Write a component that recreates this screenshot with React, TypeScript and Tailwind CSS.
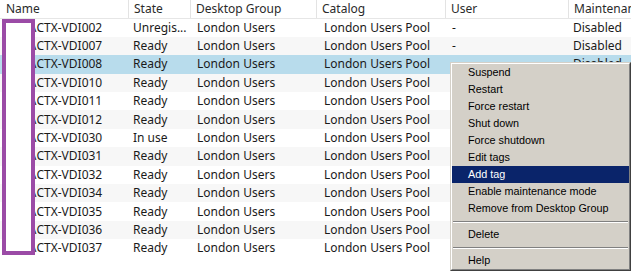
import React from "react";

const rows: [string, string, string, string, string, string][] = [
  ["CTX-VDI002", "Unregis...", "London Users", "London Users Pool", "-", "Disabled"],
  ["CTX-VDI007", "Ready", "London Users", "London Users Pool", "-", "Disabled"],
  ["CTX-VDI008", "Ready", "London Users", "London Users Pool", "", "Disabled"],
  ["CTX-VDI010", "Ready", "London Users", "London Users Pool", "", ""],
  ["CTX-VDI011", "Ready", "London Users", "London Users Pool", "", ""],
  ["CTX-VDI012", "Ready", "London Users", "London Users Pool", "", ""],
  ["CTX-VDI030", "In use", "London Users", "London Users Pool", "", ""],
  ["CTX-VDI031", "Ready", "London Users", "London Users Pool", "", ""],
  ["CTX-VDI032", "Ready", "London Users", "London Users Pool", "", ""],
  ["CTX-VDI034", "Ready", "London Users", "London Users Pool", "", ""],
  ["CTX-VDI035", "Ready", "London Users", "London Users Pool", "", ""],
  ["CTX-VDI036", "Ready", "London Users", "London Users Pool", "", ""],
  ["CTX-VDI037", "Ready", "London Users", "London Users Pool", "", ""],
];

const cols = "grid grid-cols-[128px_62px_126px_129px_123px_1fr]";

type MenuEntry = { label?: string; sep?: boolean; active?: boolean };
const menu: MenuEntry[] = [
  { label: "Suspend" },
  { label: "Restart" },
  { label: "Force restart" },
  { label: "Shut down" },
  { label: "Force shutdown" },
  { label: "Edit tags" },
  { label: "Add tag", active: true },
  { label: "Enable maintenance mode" },
  { label: "Remove from Desktop Group" },
  { sep: true },
  { label: "Delete" },
  { sep: true },
  { label: "Help" },
];

export default function App() {
  return (
    <div
      className="relative w-[631px] h-[271px] overflow-hidden bg-white text-[12px] text-[#1a1a1a]"
      style={{ fontFamily: '"Noto Sans", "Open Sans", sans-serif' }}
    >
      {/* header */}
      <div className={`${cols} h-[18.5px] border-b border-[#e6e6e6] text-[#2a2a2a]`}>
        {["Name", "State", "Desktop Group", "Catalog", "User", "Maintenan"].map((h, i) => (
          <div
            key={h}
            className={`flex items-center whitespace-nowrap overflow-hidden ${
              i === 0 ? "pl-[6px]" : "pl-[5px] border-l border-[#e3e3e3]"
            }`}
          >
            {h}
          </div>
        ))}
      </div>
      {/* rows */}
      {rows.map((r, i) => (
        <div
          key={r[0]}
          className={`${cols} h-[18.4px] ${
            i === 2 ? "bg-[#b8dcec]" : i % 2 === 1 ? "bg-[#f7f7f7]" : "bg-white"
          }`}
        >
          <div className="flex items-center pl-[32px] whitespace-nowrap overflow-hidden">
            {"\\" + r[0]}
          </div>
          <div className="flex items-center pl-[5px] whitespace-nowrap">{r[1]}</div>
          <div className="flex items-center pl-[7px] whitespace-nowrap">{r[2]}</div>
          <div className="flex items-center pl-[8px] whitespace-nowrap">{r[3]}</div>
          <div className="flex items-center pl-[7px] whitespace-nowrap">{r[4]}</div>
          <div className="flex items-center pl-[5px] whitespace-nowrap">{r[5]}</div>
        </div>
      ))}

      {/* purple redaction box */}
      <div className="absolute left-[2px] top-[19px] w-[33px] h-[236px] border-[4px] border-[#9b4ba6] bg-white" />

      {/* context menu */}
      <div
        className="absolute left-[450px] top-[62px] w-[181px] border-t border-l border-t-[#d4d0c8] border-l-[#d4d0c8] border-r border-b border-r-[#404040] border-b-[#404040] bg-[#d4d0c8] text-[10.8px] text-black"
        style={{ fontFamily: '"Liberation Sans", Arial, sans-serif' }}
      >
        <div className="border-t border-l border-t-white border-l-white border-r border-b border-r-[#808080] border-b-[#808080]">
          {menu.map((m, i) =>
            m.sep ? (
              <div key={i} className="h-[9px] flex items-center px-[1px]">
                <div className="w-full border-t border-t-[#808080] border-b border-b-white" />
              </div>
            ) : (
              <div
                key={i}
                className={`h-[17px] flex items-center pl-[16px] whitespace-nowrap ${
                  m.active ? "bg-[#0a246a] text-white" : ""
                }`}
              >
                {m.label}
              </div>
            )
          )}
        </div>
      </div>
    </div>
  );
}
